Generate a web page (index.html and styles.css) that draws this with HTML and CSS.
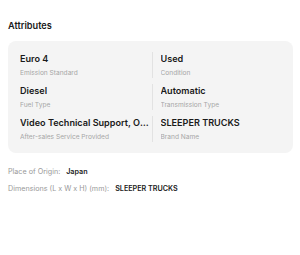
FILE: index.html
```html
<!DOCTYPE html>
<html lang="en">
<head>
<meta charset="utf-8">
<title>Attributes</title>
<link rel="stylesheet" href="styles.css">
</head>
<body>
<section class="attributes">
  <h2 class="attributes-title">Attributes</h2>
  <div class="attr-card">
    <div class="attr-item">
      <div class="attr-value">Euro 4</div>
      <div class="attr-label">Emission Standard</div>
    </div>
    <div class="attr-item attr-item--right">
      <div class="attr-value">Used</div>
      <div class="attr-label">Condition</div>
    </div>
    <div class="attr-item">
      <div class="attr-value">Diesel</div>
      <div class="attr-label">Fuel Type</div>
    </div>
    <div class="attr-item attr-item--right">
      <div class="attr-value">Automatic</div>
      <div class="attr-label">Transmission Type</div>
    </div>
    <div class="attr-item">
      <div class="attr-value">Video Technical Support, Online Support</div>
      <div class="attr-label">After-sales Service Provided</div>
    </div>
    <div class="attr-item attr-item--right">
      <div class="attr-value">SLEEPER TRUCKS</div>
      <div class="attr-label">Brand Name</div>
    </div>
  </div>
  <ul class="extra-list">
    <li class="extra-row"><span class="extra-key">Place of Origin:</span><span class="extra-val">Japan</span></li>
    <li class="extra-row"><span class="extra-key">Dimensions (L x W x H) (mm):</span><span class="extra-val">SLEEPER TRUCKS</span></li>
  </ul>
</section>
</body>
</html>
```

FILE: styles.css
```css
* {
  box-sizing: border-box;
}

html, body {
  margin: 0;
  padding: 0;
  background: #fff;
}

body {
  font-family: Inter, "Noto Sans", sans-serif;
  color: #1a1a1a;
}

.attributes {
  padding: 19px 7px 0 8px;
}

.attributes-title {
  margin: 0 0 9px;
  font-size: 9.2px;
  font-weight: 600;
  line-height: 13px;
  color: #1a1a1a;
}

.attr-card {
  background: #f4f4f4;
  border-radius: 8px;
  padding: 11px 12px 11px;
  display: grid;
  grid-template-columns: 1fr 1fr;
  column-gap: 2px;
  row-gap: 6px;
}

.attr-item {
  min-width: 0;
}

.attr-item--right {
  border-left: 1px solid #e2e2e2;
  padding-left: 8px;
}

.attr-value {
  font-size: 9.1px;
  font-weight: 600;
  line-height: 13px;
  color: #1a1a1a;
  white-space: nowrap;
  overflow: hidden;
  text-overflow: ellipsis;
}

.attr-label {
  margin-top: 3px;
  font-size: 6.6px;
  line-height: 10px;
  color: #a6a6a6;
  white-space: nowrap;
  overflow: hidden;
  text-overflow: ellipsis;
}

.extra-list {
  list-style: none;
  margin: 13px 0 0;
  padding: 0;
  display: flex;
  flex-direction: column;
  gap: 6px;
}

.extra-row {
  display: flex;
  gap: 6px;
  font-size: 7.2px;
  line-height: 11px;
}

.extra-key {
  color: #999;
}

.extra-val {
  color: #1a1a1a;
  font-weight: 600;
}
```
